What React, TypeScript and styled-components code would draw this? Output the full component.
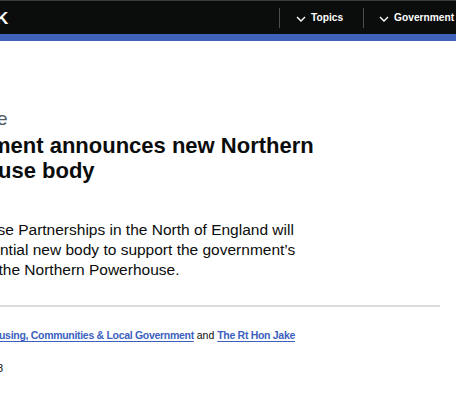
import React from "react";
import styled, { createGlobalStyle } from "styled-components";

const Global = createGlobalStyle`
  html, body { margin: 0; padding: 0; background: #ffffff; }
  body {
    font-family: "Liberation Sans", Arial, sans-serif;
    color: #0b0c0c;
    overflow: hidden;
    width: 456px;
  }
`;

const Header = styled.header`
  display: grid;
  grid-template-columns: 279px auto auto;
  align-items: start;
  height: 33px;
  background: #0b0c0c;
  border-top: 1px solid #3a3a3a;
  border-bottom: 7px solid #4062ba;
  overflow: hidden;
`;

const Clip = styled.div`
  overflow: hidden;
  white-space: nowrap;
`;

const Cut = styled.span<{ $cut?: number }>`
  display: inline-block;
  margin-left: ${(p) => -(p.$cut ?? 0)}px;
`;

const Logo = styled(Clip)`
  height: 33px;
  font-size: 17px;
  font-weight: 700;
  line-height: 33px;
  padding-top: 1px;
  box-sizing: border-box;
  color: #ffffff;
`;

const NavItem = styled.div<{ $pad: number; $right: number }>`
  display: flex;
  align-items: center;
  gap: 5px;
  height: 20px;
  margin-top: 7px;
  padding-left: ${(p) => p.$pad}px;
  padding-right: ${(p) => p.$right}px;
  border-left: 1px solid #4b4f52;
  color: #ffffff;
  font-size: 10.2px;
  font-weight: 700;
  line-height: 20px;
  white-space: nowrap;
`;

const Chevron = () => (
  <svg width="10" height="6" viewBox="0 0 10 6" style={{ marginTop: 1 }}>
    <path d="M1 1 L5 5 L9 1" fill="none" stroke="#ffffff" strokeWidth="1.4" />
  </svg>
);

const Main = styled.main`
  display: flex;
  flex-direction: column;
  width: 440px;
`;

const Caption = styled(Clip)`
  margin-top: 65px;
  font-size: 19px;
  line-height: 25px;
  color: #505a5f;
`;

const Title = styled.h1`
  margin: 2px 0 0;
  font-size: 22px;
  font-weight: 700;
  line-height: 25px;
  color: #0b0c0c;
`;

const Lead = styled.p`
  margin: 37px 0 0;
  font-size: 15.5px;
  line-height: 20px;
  color: #0b0c0c;
`;

const Rule = styled.hr`
  margin: 25px 0 0;
  border: 0;
  height: 2px;
  background: #dcdcdc;
`;

const Meta = styled(Clip)`
  margin-top: 20px;
  font-size: 10.5px;
  line-height: 16px;
  color: #0b0c0c;
`;

const MetaLink = styled.a`
  font-weight: 700;
  letter-spacing: -0.3px;
  color: #3c5fc0;
  text-decoration: underline;
  text-underline-offset: 2px;
  text-decoration-thickness: 1px;
`;

const DateLine = styled(Clip)`
  margin-top: 17px;
  font-size: 11px;
  line-height: 16px;
  color: #0b0c0c;
`;

export default function App() {
  return (
    <>
      <Global />
      <Header>
        <Logo>
          <Cut $cut={4}>K</Cut>
        </Logo>
        <NavItem $pad={16} $right={20}>
          <Chevron />
          <span>Topics</span>
        </NavItem>
        <NavItem $pad={15} $right={20}>
          <Chevron />
          <span>Government</span>
        </NavItem>
      </Header>
      <Main>
        <Caption>
          <Cut $cut={3}>e</Cut>
        </Caption>
        <Title>
          <Clip>
            <Cut $cut={9}>ment announces new Northern</Cut>
          </Clip>
          <Clip>
            <Cut $cut={2}>use body</Cut>
          </Clip>
        </Title>
        <Lead>
          <Clip>
            <Cut $cut={2.5}>se Partnerships in the North of England will</Cut>
          </Clip>
          <Clip>
            <Cut $cut={0}>ntial new body to support the government’s</Cut>
          </Clip>
          <Clip>
            <Cut $cut={1.5}>the Northern Powerhouse.</Cut>
          </Clip>
        </Lead>
        <Rule />
        <Meta>
          <Cut $cut={1}>
            <MetaLink href="#">using, Communities &amp; Local Government</MetaLink>{" "}
            and <MetaLink href="#">The Rt Hon Jake</MetaLink>
          </Cut>
        </Meta>
        <DateLine>
          <Cut $cut={3}>8</Cut>
        </DateLine>
      </Main>
    </>
  );
}
